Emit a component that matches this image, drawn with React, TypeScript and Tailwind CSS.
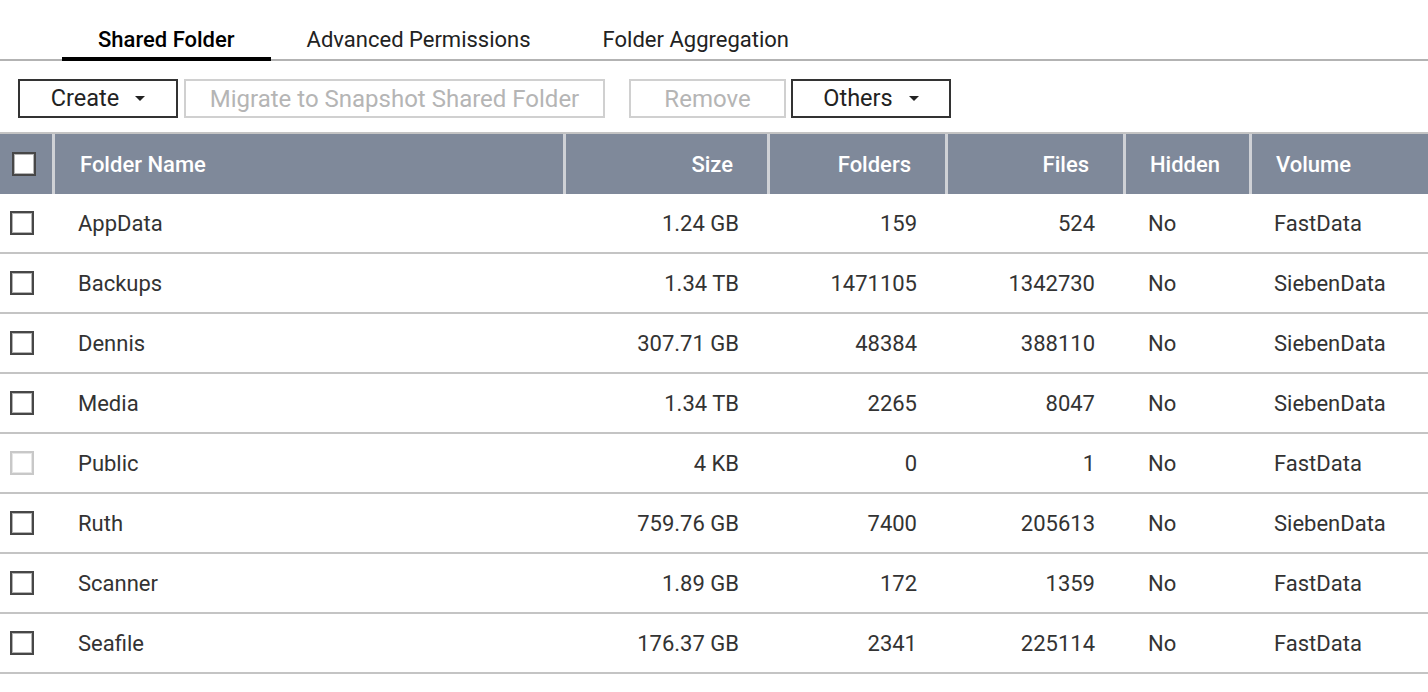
import React from "react";

const rows = [
  { name: "AppData", size: "1.24 GB", folders: "159", files: "524", hidden: "No", volume: "FastData" },
  { name: "Backups", size: "1.34 TB", folders: "1471105", files: "1342730", hidden: "No", volume: "SiebenData" },
  { name: "Dennis", size: "307.71 GB", folders: "48384", files: "388110", hidden: "No", volume: "SiebenData" },
  { name: "Media", size: "1.34 TB", folders: "2265", files: "8047", hidden: "No", volume: "SiebenData" },
  { name: "Public", size: "4 KB", folders: "0", files: "1", hidden: "No", volume: "FastData", disabled: true },
  { name: "Ruth", size: "759.76 GB", folders: "7400", files: "205613", hidden: "No", volume: "SiebenData" },
  { name: "Scanner", size: "1.89 GB", folders: "172", files: "1359", hidden: "No", volume: "FastData" },
  { name: "Seafile", size: "176.37 GB", folders: "2341", files: "225114", hidden: "No", volume: "FastData" },
];

function Caret() {
  return (
    <svg width="10" height="6" viewBox="0 0 10 6" className="ml-[16px]">
      <path d="M0 0 L10 0 L5 5 Z" fill="#222" />
    </svg>
  );
}

function Checkbox({ disabled }: { disabled?: boolean }) {
  return (
    <div
      className={
        disabled
          ? "w-[24px] h-[24px] border-2 border-[#c8c8c8] bg-white shadow-[inset_0_0_0_1px_#e6e6e6]"
          : "w-[24px] h-[24px] border-2 border-[#474747] bg-white shadow-[inset_0_0_0_1px_#b4b4b4]"
      }
    />
  );
}

const grid = "grid grid-cols-[52px_511px_204px_178px_178px_126px_1fr]";

export default function App() {
  return (
    <div className="w-[1428px] h-[692px] bg-white overflow-hidden text-[#333]" style={{ fontFamily: "Roboto, 'Liberation Sans', sans-serif" }}>
      {/* Tabs */}
      <div className="h-[61px] border-b-2 border-[#b3b3b3] flex pl-[62px]">
        <div className="relative px-[36px] flex items-center pt-[20px] text-[22px] font-medium text-black">
          Shared Folder
          <div className="absolute left-0 right-0 bottom-[-2px] h-[4px] bg-black" />
        </div>
        <div className="px-[36px] flex items-center pt-[20px] text-[22px] text-[#222]">Advanced Permissions</div>
        <div className="px-[36px] flex items-center pt-[20px] text-[22px] text-[#222]">Folder Aggregation</div>
      </div>

      {/* Toolbar */}
      <div className="flex mt-[18px] ml-[18px] h-[39px]">
        <button className="w-[160px] h-[39px] border-2 border-[#333] flex items-center justify-center text-[23.5px] text-[#222]">
          Create
          <Caret />
        </button>
        <button className="ml-[6px] w-[421px] h-[39px] border-2 border-[#d0d0d0] flex items-center justify-center text-[24px] text-[#b5b5b5]">
          Migrate to Snapshot Shared Folder
        </button>
        <button className="ml-[24px] w-[157px] h-[39px] border-2 border-[#d0d0d0] flex items-center justify-center text-[24px] text-[#b5b5b5]">
          Remove
        </button>
        <button className="ml-[5px] w-[160px] h-[39px] border-2 border-[#333] flex items-center justify-center text-[23.5px] text-[#222]">
          Others
          <Caret />
        </button>
      </div>

      {/* Table */}
      <div className="mt-[14px] border-t-2 border-[#c4c4c4]">
        <div className={grid + " h-[60px] bg-[#7f899a] text-white text-[22px] font-medium"}>
          <div className="flex items-center pl-[12px]">
            <Checkbox />
          </div>
          <div className="flex items-center pl-[25px] border-l-[3px] border-[#cfd1d6]">Folder Name</div>
          <div className="flex items-center justify-end pr-[34px] border-l-[3px] border-[#cfd1d6]">Size</div>
          <div className="flex items-center justify-end pr-[34px] border-l-[3px] border-[#cfd1d6]">Folders</div>
          <div className="flex items-center justify-end pr-[34px] border-l-[3px] border-[#cfd1d6]">Files</div>
          <div className="flex items-center pl-[24px] border-l-[3px] border-[#cfd1d6]">Hidden</div>
          <div className="flex items-center pl-[24px] border-l-[3px] border-[#cfd1d6]">Volume</div>
        </div>
        {rows.map((r) => (
          <div key={r.name} className={grid + " h-[60px] border-b-2 border-[#c4c4c4] text-[22px] text-[#333]"}>
            <div className="flex items-center pl-[10px]">
              <Checkbox disabled={r.disabled} />
            </div>
            <div className="flex items-center pl-[26px]">{r.name}</div>
            <div className="flex items-center justify-end pr-[28px]">{r.size}</div>
            <div className="flex items-center justify-end pr-[28px]">{r.folders}</div>
            <div className="flex items-center justify-end pr-[28px]">{r.files}</div>
            <div className="flex items-center pl-[25px]">{r.hidden}</div>
            <div className="flex items-center pl-[25px]">{r.volume}</div>
          </div>
        ))}
      </div>
    </div>
  );
}
